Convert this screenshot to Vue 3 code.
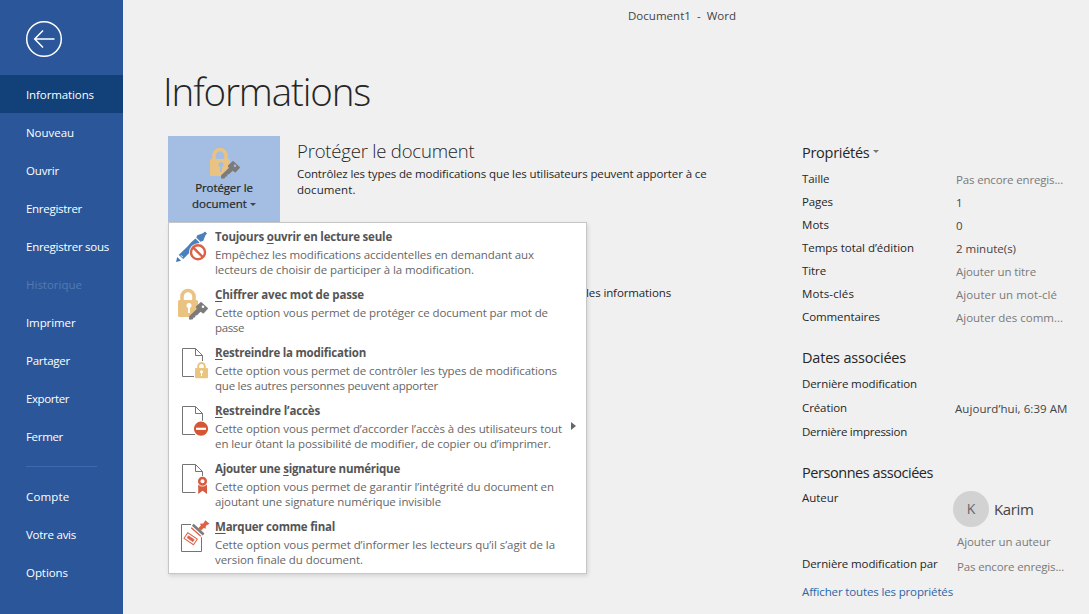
<script setup>
// Spreads a line's letters so that it takes the given advance width.
const vFit = {
  mounted(el, { value }) {
    const natural = el.getBoundingClientRect().width
    const count = el.textContent.length
    el.style.letterSpacing = `${(value - natural) / count}px`
  },
}

const nav = [
  { text: 'Informations', w: 68, active: true },
  { text: 'Nouveau', w: 48 },
  { text: 'Ouvrir', w: 33 },
  { text: 'Enregistrer', w: 56 },
  { text: 'Enregistrer sous', w: 83 },
  { text: 'Historique', w: 56, disabled: true },
  { text: 'Imprimer', w: 49.5 },
  { text: 'Partager', w: 44 },
  { text: 'Exporter', w: 43 },
  { text: 'Fermer', w: 37 },
]
const navBottom = [
  { text: 'Compte', w: 43.5 },
  { text: 'Votre avis', w: 50 },
  { text: 'Options', w: 42 },
]

const menu = [
  { icon: 'pen', title: ['Toujours ', 'o', 'uvrir en lecture seule'], w: 177,
    lines: [['Empêchez les modifications accidentelles en demandant aux', 319], ['lecteurs de choisir de participer à la modification.', 259]] },
  { icon: 'lock', title: ['', 'C', 'hiffrer avec mot de passe'], w: 149,
    lines: [['Cette option vous permet de protéger ce document par mot de', 333], ['passe', 29]] },
  { icon: 'doclock', title: ['', 'R', 'estreindre la modification'], w: 151,
    lines: [['Cette option vous permet de contrôler les types de modifications', 342], ['que les autres personnes peuvent apporter', 223]] },
  { icon: 'docstop', title: ['', 'R', 'estreindre l’accès'], w: 105, sub: true,
    lines: [['Cette option vous permet d’accorder l’accès à des utilisateurs tout', 347], ['en leur ôtant la possibilité de modifier, de copier ou d’imprimer.', 336]] },
  { icon: 'docseal', title: ['Ajouter une ', 's', 'ignature numérique'], w: 185,
    lines: [['Cette option vous permet de garantir l’intégrité du document en', 339], ['ajoutant une signature numérique invisible', 226]] },
  { icon: 'stamp', title: ['', 'M', 'arquer comme final'], w: 120,
    lines: [['Cette option vous permet d’informer les lecteurs qu’il s’agit de la', 340], ['version finale du document.', 148]] },
]

const props = [
  { k: 'Taille', kw: 27.5, v: 'Pas encore enregis...', vw: 107, soft: true },
  { k: 'Pages', kw: 31, v: '1', vw: 7 },
  { k: 'Mots', kw: 27, v: '0', vw: 7 },
  { k: 'Temps total d’édition', kw: 112, v: '2 minute(s)', vw: 60 },
  { k: 'Titre', kw: 24, v: 'Ajouter un titre', vw: 80, soft: true },
  { k: 'Mots-clés', kw: 52, v: 'Ajouter un mot-clé', vw: 101, soft: true },
  { k: 'Commentaires', kw: 78, v: 'Ajouter des comm...', vw: 107, soft: true },
]
const dates = [
  { k: 'Dernière modification', kw: 115 },
  { k: 'Création', kw: 45, v: 'Aujourd’hui, 6:39 AM', vw: 112.5 },
  { k: 'Dernière impression', kw: 105 },
]
</script>

<template>
  <div class="app">
    <svg class="defs" width="0" height="0" aria-hidden="true">
      <symbol id="padlock" viewBox="0 0 36 36">
        <path d="M8 15V10.500a6 6 0 0 1 12 0V15" fill="none" stroke="#eac282" stroke-width="3.600" />
        <path d="M5.500 14h17a1.500 1.500 0 0 1 1.500 1.500V24l-6.500 7H5.500A1.500 1.500 0 0 1 4 29.500v-14A1.500 1.500 0 0 1 5.500 14z" fill="#eac282" />
        <circle cx="15" cy="19.500" r="2.500" class="hole" />
        <path d="M14 20h2v7h-2z" class="hole" />
        <path d="M27.500 16.200l6.300 5.800q.4.500 0 1l-4 4.200q-.5.400-1 0l-2.300-1.500-3.500 3.500-1.600.2-.2 2-1.800.2-.4 1.600-3.200.5-.8-.8.200-2.600 7.600-7.400-1.100-2.200 4.800-4.500q.5-.4 1 0z" fill="#7b7b7b" />
        <circle cx="29" cy="20.800" r="1.300" class="hole" />
      </symbol>
      <symbol id="sheet" viewBox="0 0 36 36">
        <path d="M21.500 32.500h-13v-28h13l7 7v10M21.500 4.500v7h7" fill="none" stroke="#747474" />
      </symbol>
    </svg>

    <nav class="side">
      <svg class="back" width="38" height="38" viewBox="0 0 38 38" fill="none" stroke="#fff">
        <circle cx="19" cy="19" r="17.300" stroke-width="1.500" />
        <path d="M29.500 19H10.500M18 10.500L9.700 19l8.300 8.500" stroke-width="1.500" />
      </svg>
      <div v-for="n in nav" :key="n.text" class="item upper" :class="{ active: n.active, disabled: n.disabled }">
        <span v-fit="n.w" class="t">{{ n.text }}</span>
      </div>
      <div class="rule"></div>
      <div v-for="n in navBottom" :key="n.text" class="item"><span v-fit="n.w" class="t">{{ n.text }}</span></div>
    </nav>

    <main class="main">
      <header class="titlebar"><span v-fit="108" class="t">Document1&nbsp; -&nbsp; Word</span></header>
      <h1><span v-fit="207" class="t">Informations</span></h1>
      <div class="columns">
        <section class="left">
          <div class="protect">
            <div class="anchor">
              <button class="big">
                <svg width="36" height="36"><use href="#padlock" /></svg>
                <span class="cap"><span v-fit="57.5" class="t">Protéger le</span></span>
                <span class="cap"><span v-fit="55" class="t">document</span><i class="caret"></i></span>
              </button>
              <div class="menu">
                <div v-for="m in menu" :key="m.icon" class="entry">
                  <svg class="ic" width="36" height="36" viewBox="0 0 36 36">
                    <template v-if="m.icon === 'pen'">
                      <path d="M2 34l1.300-5 3.700 3.700z" fill="#3f78b8" />
                      <path d="M4.700 27l8.800-8.500Q18 13 21.500 10.500l4 4L9.300 31z" fill="#4a81bd" />
                      <path d="M22.300 9.600l1-2.300L29 5.200l2-1.700 2 2-1.700 2-2 5.300-2.800.9z" fill="#4a81bd" />
                      <path d="M7 27.300l1.800 1.800" stroke="#fff" stroke-width="1" />
                      <circle cx="24" cy="24.300" r="9" fill="#fff" />
                      <circle cx="24" cy="24.300" r="7" fill="none" stroke="#dc6145" stroke-width="2.400" />
                      <path d="M19 19.300l10 10" stroke="#dc6145" stroke-width="2.400" />
                    </template>
                    <use v-else-if="m.icon === 'lock'" href="#padlock" />
                    <template v-else-if="m.icon === 'doclock'">
                      <use href="#sheet" />
                      <path d="M20 17h15v18H20z" fill="#fff" />
                      <path d="M24.200 25v-2.700a3.300 3.300 0 0 1 6.600 0V25" fill="none" stroke="#eac57f" stroke-width="2" />
                      <rect x="21" y="24" width="13" height="10.300" rx="1" fill="#eac57f" />
                      <circle cx="27.500" cy="27.700" r="1.500" fill="#fff" />
                      <path d="M27 28h1v4h-1z" fill="#fff" />
                    </template>
                    <template v-else-if="m.icon === 'docstop'">
                      <use href="#sheet" />
                      <circle cx="27" cy="26.700" r="8.200" fill="#fff" />
                      <circle cx="27" cy="26.700" r="7.100" fill="#d65532" />
                      <path d="M22 25.700h10v2.200H22z" fill="#fff" />
                    </template>
                    <template v-else-if="m.icon === 'docseal'">
                      <use href="#sheet" />
                      <path d="M23 16h12v19H23z" fill="#fff" />
                      <path d="M24.200 24.500h8.800V34l-4.400-3.200L24.200 34z" fill="#d95b3f" />
                      <circle cx="28.500" cy="21.300" r="5.300" fill="#fff" />
                      <circle cx="28.500" cy="21.300" r="3.300" fill="none" stroke="#d95b3f" stroke-width="2.500" />
                    </template>
                    <template v-else>
                      <path d="M17 6.500H7.500v27h20V19" fill="none" stroke="#747474" />
                      <path d="M17 7l12 10.500" stroke="#fff" stroke-width="6" />
                      <path d="M18.800 6.800l10.800 9.700" stroke="#7b7b7b" stroke-width="2.600" />
                      <path d="M17.300 9.700l9.500 8.500" stroke="#dc6145" stroke-width="1.300" />
                      <path d="M24.300 10.200l2.700-3-1.300-1.500 3.600-.2 2-3.300 4.200 3.600-3.600 2-.4 3.200-1.600-1.200-2.800 2.700z" fill="#dc6145" />
                      <g transform="rotate(34 16.500 20.500)" fill="none" stroke="#dc6145">
                        <rect x="11" y="17.200" width="11.500" height="6.800" stroke-width="1" />
                        <rect x="13.300" y="19.400" width="7" height="2.400" fill="#dc6145" stroke-width=".6" />
                      </g>
                    </template>
                  </svg>
                  <div class="words">
                    <div class="name"><span v-fit="m.w" class="t">{{ m.title[0] }}<u>{{ m.title[1] }}</u>{{ m.title[2] }}</span></div>
                    <div v-for="l in m.lines" :key="l[0]" class="desc"><span v-fit="l[1]" class="t">{{ l[0] }}</span></div>
                  </div>
                  <i v-if="m.sub" class="arrow"></i>
                </div>
              </div>
            </div>
            <div class="about">
              <h2><span v-fit="177.5" class="t">Protéger le document</span></h2>
              <p><span v-fit="409.5" class="t">Contrôlez les types de modifications que les utilisateurs peuvent apporter à ce</span></p>
              <p><span v-fit="58.5" class="t">document.</span></p>
              <p class="behind"><span v-fit="85" class="t">les informations</span></p>
            </div>
          </div>
        </section>

        <aside class="right">
          <h3 class="first"><span v-fit="67.5" class="t">Propriétés</span><i class="caret grey"></i></h3>
          <div v-for="p in props" :key="p.k" class="row">
            <span class="k"><span v-fit="p.kw" class="t">{{ p.k }}</span></span>
            <span class="v" :class="{ soft: p.soft }"><span v-fit="p.vw" class="t">{{ p.v }}</span></span>
          </div>
          <h3 class="dates"><span v-fit="104" class="t">Dates associées</span></h3>
          <div v-for="p in dates" :key="p.k" class="row tall">
            <span class="k wide"><span v-fit="p.kw" class="t">{{ p.k }}</span></span>
            <span v-if="p.v" class="v"><span v-fit="p.vw" class="t">{{ p.v }}</span></span>
          </div>
          <h3 class="people"><span v-fit="131" class="t">Personnes associées</span></h3>
          <div class="author">
            <span class="k"><span v-fit="36.5" class="t">Auteur</span></span>
            <div class="person">
              <span class="avatar">K</span><span class="who"><span v-fit="39.5" class="t">Karim</span></span>
            </div>
          </div>
          <div class="row add"><span class="k"></span><span class="v soft"><span v-fit="93.5" class="t">Ajouter un auteur</span></span></div>
          <div class="row by">
            <span class="k"><span v-fit="135.5" class="t">Dernière modification par</span></span>
            <span class="v soft"><span v-fit="107" class="t">Pas encore enregis...</span></span>
          </div>
          <div class="link"><span v-fit="151" class="t">Afficher toutes les propriétés</span></div>
        </aside>
      </div>
    </main>
  </div>
</template>

<style>
body { margin: 0; overflow: hidden; }
</style>

<style scoped>
.app {
  display: flex; width: 1089px; height: 614px; overflow: hidden;
  background: #f0f0f0; color: #262626;
  font: 11.5px/16px "Open Sans", "Noto Sans", sans-serif;
}
.defs { position: absolute; }
.t { display: inline-block; white-space: pre; }
h1, h2, h3, p { margin: 0; font-weight: 400; }

.side { width: 123px; flex: none; background: #2b579a; color: #fff; }
.back { display: block; margin: 20px 0 17px 25px; }
.item { height: 38px; line-height: 37px; padding-left: 26px; }
.item.upper { line-height: 40px; }
.item.active { background: #124078; }
.item.disabled { color: #5479b3; }
.rule { height: 1px; width: 71px; margin: 11px 0 11px 26px; background: #4169b2; }

.main { flex: 1; min-width: 0; }
.titlebar { height: 32px; line-height: 32px; padding-left: 505px; color: #444; }
h1 { height: 104px; padding-left: 40px; font-size: 38.5px; font-weight: 300; line-height: 118px; }
.columns { display: flex; }
.left { width: 679px; padding-left: 45px; box-sizing: border-box; flex: none; }
.protect { display: flex; gap: 17px; }
.anchor { position: relative; width: 112px; flex: none; }
.big {
  display: flex; flex-direction: column; align-items: center; width: 112px; height: 87px;
  margin: 0; padding: 9px 0 0; border: 0; background: #a4bde3; color: #262626; font: inherit; --hole: #a4bde3;
}
.big svg { flex: none; margin-bottom: -1px; }
.cap { display: flex; align-items: center; height: 16px; line-height: 16px; -webkit-text-stroke: .2px #262626; }
.caret { width: 0; height: 0; margin-left: 3px; border: 3px solid transparent; border-top-color: #444; border-bottom: 0; }
.caret.grey { border-top-color: #777; margin: -3px 0 0 3px; }
.hole { fill: var(--hole, #fff); }

.menu {
  position: absolute; left: 0; top: 86px; z-index: 2; width: 419px; height: 352px; box-sizing: border-box;
  padding-top: 1px; background: #fff; border: 1px solid #c6c6c6; box-shadow: 1px 2px 4px rgba(0, 0, 0, .12); color: #666;
}
.entry { display: flex; height: 58px; padding: 4px 0 0 5px; box-sizing: border-box; }
.ic { flex: none; margin-right: 5px; }
.words { width: 354px; flex: none; }
.name { height: 19px; line-height: 18px; font-weight: 700; color: #555; }
.name u { text-underline-offset: 2px; text-decoration-thickness: 1px; }
.desc { height: 15px; line-height: 15px; }
.arrow { align-self: flex-start; margin: 20px 0 0 2px; border: 4px solid transparent; border-left: 5px solid #666; border-right: 0; }

.about h2 { height: 30px; line-height: 29px; font-size: 18.500px; font-weight: 300; color: #262626; }
.about p { height: 16px; }
.about p.behind { margin-top: 87px; padding-left: 289px; }

.right { width: 287px; }
h3 { font-size: 14.5px; line-height: 20px; height: 20px; }
h3.first { display: flex; align-items: center; margin: 7px 0 8px; }
.row { display: flex; height: 23px; }
.row.tall { height: 24px; }
.k { width: 154px; flex: none; line-height: 16px; white-space: nowrap; }
.k.wide { width: 153px; }
.v { line-height: 18px; color: #444; }
.soft { color: #7a7a7a; }
h3.dates { margin: 16px 0 8px; }
h3.people { margin: 15px 0 7px; }
.author { display: flex; height: 44px; }
.author .k { width: 151px; }
.person { display: flex; align-items: center; height: 36px; margin-top: 1px; }
.avatar { width: 36px; height: 36px; border-radius: 50%; background: #d2d2d2; text-align: center; line-height: 36px; font-size: 14px; color: #666; }
.who { margin-left: 5px; font-size: 15px; line-height: 20px; color: #444; }
.add { height: 22px; }
.add .v { line-height: 16px; }
.add .k, .by .k { width: 155px; }
.by { height: 28px; }
.by .v { line-height: 22px; }
.link { color: #2b65a8; }
</style>
